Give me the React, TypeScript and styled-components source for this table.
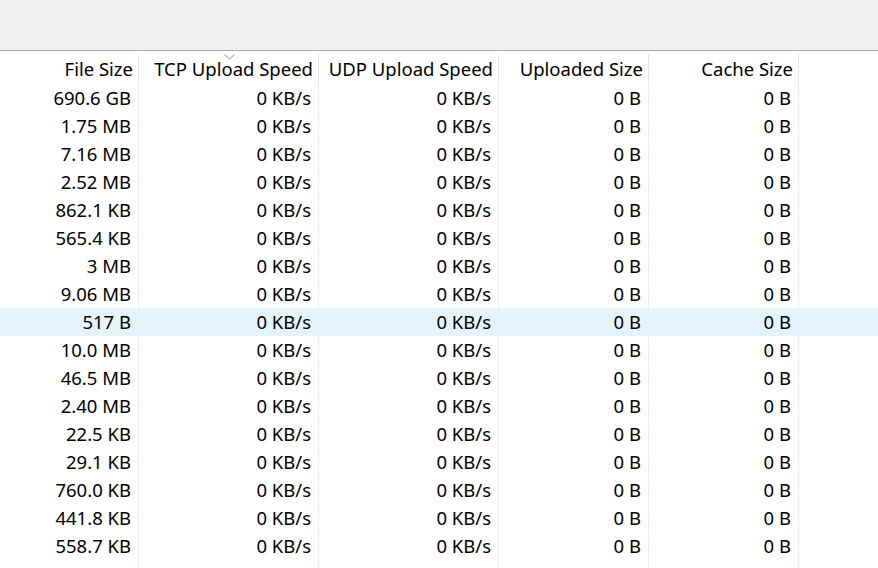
import React from "react";
import styled, { createGlobalStyle } from "styled-components";

const Global = createGlobalStyle`
  html, body { margin: 0; padding: 0; background: #fff; overflow: hidden; }
  body { font-family: "Noto Sans", "Open Sans", sans-serif; }
`;

const Page = styled.div`
  width: 878px;
  height: 568px;
  display: flex;
  flex-direction: column;
  overflow: hidden;
  background: #fff;
`;

const Toolbar = styled.div`
  height: 50px;
  flex: none;
  background: #f0f0f0;
  border-bottom: 1px solid #a8a8a8;
`;

const cols = "139px 180px 180px 150px 150px 1fr";

const HeaderRow = styled.div`
  display: grid;
  grid-template-columns: ${cols};
  height: 33px;
  flex: none;
  background: #fff;
`;

const HeaderCell = styled.div<{ $last?: boolean }>`
  position: relative;
  display: flex;
  align-items: center;
  justify-content: flex-end;
  padding: 1px 6px 0 0;
  font-size: 18.5px;
  color: #000;
  white-space: nowrap;
  ${(p) =>
    p.$last
      ? ""
      : `&::after {
    content: "";
    position: absolute;
    right: 0;
    top: 3px;
    bottom: 0;
    width: 1px;
    background: #e6e6e6;
  }`}
`;

const SortArrow = styled.svg`
  position: absolute;
  top: 3px;
  left: 50%;
  margin-left: -5px;
`;

const Body = styled.div`
  display: flex;
  flex-direction: column;
`;

const Row = styled.div<{ $selected?: boolean }>`
  display: grid;
  grid-template-columns: ${cols};
  height: 28px;
  flex: none;
  background: ${(p) => (p.$selected ? "#e5f3ff" : "#fff")};
`;

const Cell = styled.div<{ $last?: boolean }>`
  display: flex;
  align-items: center;
  justify-content: flex-end;
  padding: 0 7px 2px 0;
  font-size: 18.5px;
  color: #000;
  white-space: nowrap;
  border-right: ${(p) => (p.$last ? "none" : "1px solid #e8f0f8")};
`;

const sizes = [
  "690.6 GB",
  "1.75 MB",
  "7.16 MB",
  "2.52 MB",
  "862.1 KB",
  "565.4 KB",
  "3 MB",
  "9.06 MB",
  "517 B",
  "10.0 MB",
  "46.5 MB",
  "2.40 MB",
  "22.5 KB",
  "29.1 KB",
  "760.0 KB",
  "441.8 KB",
  "558.7 KB",
  "185.7 MB",
];

const headers = ["File Size", "TCP Upload Speed", "UDP Upload Speed", "Uploaded Size", "Cache Size"];

export default function App() {
  return (
    <Page>
      <Global />
      <Toolbar />
      <HeaderRow>
        {headers.map((h, i) => (
          <HeaderCell key={h}>
            {i === 1 && (
              <SortArrow width="11" height="6" viewBox="0 0 11 6">
                <path d="M0.5 0.5 L5.5 5 L10.5 0.5" fill="none" stroke="#8a8a8a" strokeWidth="1" />
              </SortArrow>
            )}
            {h}
          </HeaderCell>
        ))}
        <HeaderCell $last />
      </HeaderRow>
      <Body>
        {sizes.map((s, i) => (
          <Row key={i} $selected={i === 8}>
            <Cell>{s}</Cell>
            <Cell>0 KB/s</Cell>
            <Cell>0 KB/s</Cell>
            <Cell>0 B</Cell>
            <Cell>0 B</Cell>
            <Cell $last />
          </Row>
        ))}
      </Body>
    </Page>
  );
}
